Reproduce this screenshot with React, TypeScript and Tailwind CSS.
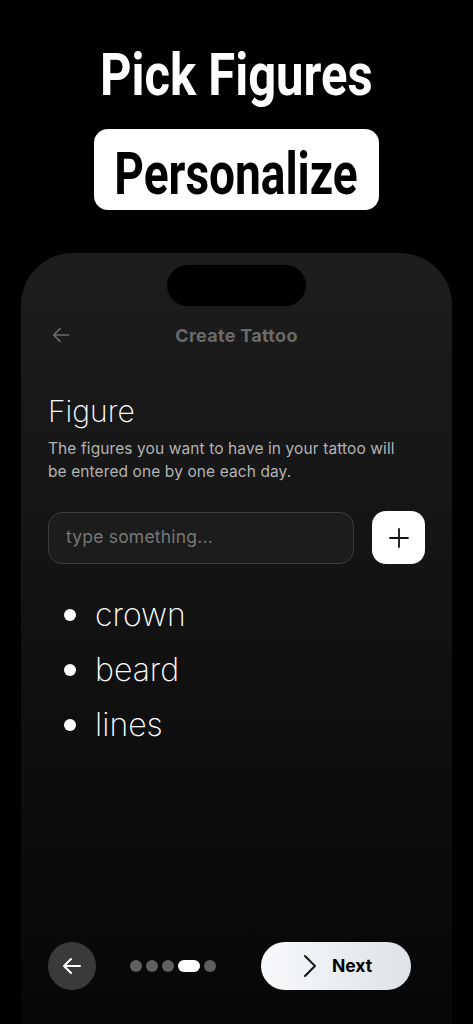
import React from "react";

const poppins = { fontFamily: "Inter, 'Noto Sans', sans-serif" };
const cond = { fontFamily: "Roboto, 'Liberation Sans', sans-serif" };

export default function App() {
  return (
    <div className="w-[473px] h-[1024px] bg-black overflow-hidden flex flex-col items-center">
      <h1 className="mt-[43px] h-[64px] flex items-center justify-center text-white text-[59px] leading-[64px] font-bold" style={cond}>
        <span className="inline-block scale-x-[0.83] whitespace-nowrap">Pick Figures</span>
      </h1>
      <div className="mt-[22px] bg-white rounded-[14px] w-[285px] h-[81px] pt-[8px] flex items-center justify-center">
        <span className="inline-block scale-x-[0.78] whitespace-nowrap text-black text-[59px] leading-none font-bold" style={cond}>
          Personalize
        </span>
      </div>
      <div
        className="mt-[43px] w-[431px] flex-1 rounded-t-[52px] bg-gradient-to-b from-[#1d1d1d] to-[#070707] flex flex-col px-[27px]"
        style={poppins}
      >
        <div className="self-center mt-[12px] w-[139px] h-[41px] rounded-full bg-black" />
        <div className="relative mt-[13px] h-[32px] flex items-center justify-center">
          <svg className="absolute left-[2px]" width="22" height="22" viewBox="0 0 24 24" fill="none" stroke="#6b6b6b" strokeWidth="1.8" strokeLinecap="round" strokeLinejoin="round">
            <path d="M20 12H4M11 5l-7 7 7 7" />
          </svg>
          <span className="text-[#6a6a6a] text-[18px] font-bold tracking-[0.3px]">Create Tattoo</span>
        </div>
        <h2 className="mt-[42px] text-white text-[30px] font-extralight leading-[36px]">Figure</h2>
        <p className="mt-[8px] text-[#b3b3b3] text-[15.5px] leading-[23px] tracking-[0.1px] w-[362px]">
          The figures you want to have in your tattoo will be entered one by one each day.
        </p>
        <div className="mt-[28px] flex items-center gap-[18px]">
          <div className="w-[306px] h-[52px] rounded-[14px] border border-[#3c3c3c] bg-[#1c1c1c] flex items-center px-[17px]">
            <span className="text-[#777777] text-[17.5px] tracking-[0.2px]">type something...</span>
          </div>
          <div className="w-[53px] h-[53px] rounded-[14px] bg-white flex items-center justify-center">
            <svg width="24" height="24" viewBox="0 0 24 24" fill="none" stroke="#111" strokeWidth="1.8" strokeLinecap="round">
              <path d="M12 3v18M3 12h18" />
            </svg>
          </div>
        </div>
        <ul className="mt-[23px] flex flex-col">
          {["crown", "beard", "lines"].map((t) => (
            <li key={t} className="flex items-center h-[55px]">
              <span className="ml-[16px] w-[12px] h-[12px] rounded-full bg-white" />
              <span className="ml-[19px] text-white text-[32px] font-extralight">{t}</span>
            </li>
          ))}
        </ul>
        <div className="flex-1" />
        <div className="mb-[34px] flex items-center">
          <div className="w-[48px] h-[48px] rounded-full bg-[#3a3a3a] flex items-center justify-center">
            <svg width="24" height="24" viewBox="0 0 24 24" fill="none" stroke="#fff" strokeWidth="2" strokeLinecap="round" strokeLinejoin="round">
              <path d="M20 12H4M11 5l-7 7 7 7" />
            </svg>
          </div>
          <div className="ml-[34px] flex items-center gap-[4px]">
            <span className="w-[12px] h-[12px] rounded-full bg-[#5f5f5f]" />
            <span className="w-[12px] h-[12px] rounded-full bg-[#5f5f5f]" />
            <span className="w-[12px] h-[12px] rounded-full bg-[#5f5f5f]" />
            <span className="w-[22px] h-[12px] rounded-full bg-white" />
            <span className="w-[12px] h-[12px] rounded-full bg-[#5f5f5f]" />
          </div>
          <div className="ml-auto mr-[14px] w-[150px] h-[48px] rounded-full bg-gradient-to-r from-[#f7f9fb] to-[#dfe3e6] flex items-center justify-center gap-[12px]">
            <svg width="20" height="26" viewBox="0 0 20 26" fill="none" stroke="#111" strokeWidth="2" strokeLinecap="round" strokeLinejoin="round">
              <path d="M5 3l10 10-10 10" />
            </svg>
            <span className="text-black text-[17.5px] font-bold">Next</span>
          </div>
        </div>
      </div>
    </div>
  );
}
